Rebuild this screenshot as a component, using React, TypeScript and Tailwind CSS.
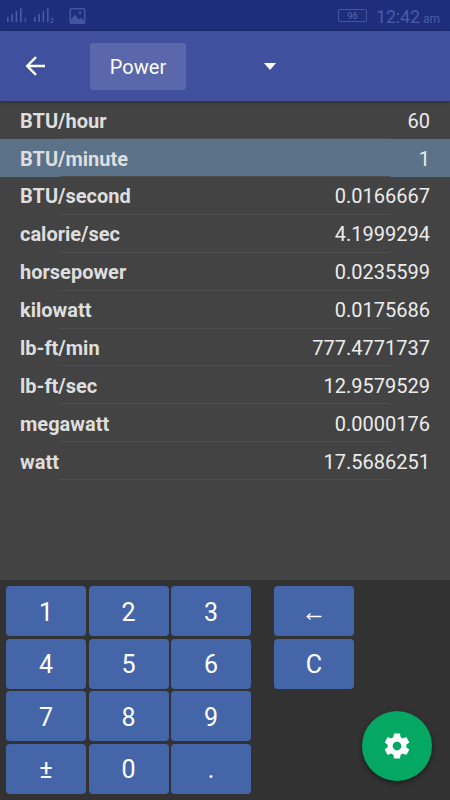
import React from "react";

const rows = [
  ["BTU/hour", "60"],
  ["BTU/minute", "1"],
  ["BTU/second", "0.0166667"],
  ["calorie/sec", "4.1999294"],
  ["horsepower", "0.0235599"],
  ["kilowatt", "0.0175686"],
  ["lb-ft/min", "777.4771737"],
  ["lb-ft/sec", "12.9579529"],
  ["megawatt", "0.0000176"],
  ["watt", "17.5686251"],
];

const digits = ["1", "2", "3", "4", "5", "6", "7", "8", "9", "±", "0", "."];

function Signal({ sim }: { sim: string }) {
  return (
    <svg width="21" height="17" viewBox="0 0 21 17" fill="#4a5ca3">
      <rect x="0" y="9" width="1.6" height="5" />
      <rect x="4.3" y="6" width="1.6" height="8" />
      <rect x="8.6" y="3" width="1.6" height="11" />
      <rect x="13" y="0" width="1.6" height="14" />
      <text x="16.2" y="15.3" fontSize="6.5" fontWeight="700" fontFamily="Roboto, sans-serif">
        {sim}
      </text>
    </svg>
  );
}

function StatusBar() {
  return (
    <div className="flex h-[31px] shrink-0 items-start bg-[#1e2e7c] pl-[7px] text-[#4a5ca3]">
      <div className="mt-2 flex gap-[5.5px]">
        <Signal sim="1" />
        <Signal sim="2" />
      </div>
      <svg className="mt-2 ml-[14px]" width="17" height="16" viewBox="0 0 17 16">
        <path
          fill="#4256a0"
          fillRule="evenodd"
          d="M2 0h13a1.5 1.5 0 0 1 1.5 1.5v13A1.5 1.5 0 0 1 15 16H2A1.5 1.5 0 0 1 .5 14.5v-13A1.5 1.5 0 0 1 2 0ZM2 1.5v10l4-5 4 5 2-2 3 3V1.5ZM11 3.2a1.5 1.5 0 1 0 .01 0Z"
        />
      </svg>
      <div className="mt-[9px] ml-auto flex h-[13px] w-[29px] items-center justify-center rounded-[2px] border border-[#4256a0] pt-px text-[9.5px] leading-none text-[#5969a9]">
        96
      </div>
      <div className="mt-[5px] mr-[10px] ml-[9px] flex h-6 w-[64px] items-baseline justify-between whitespace-nowrap leading-[24px]">
        <span className="text-[18px] tracking-[-0.2px]">12:42</span>
        <span className="text-[12px]">am</span>
      </div>
    </div>
  );
}

function Key({ label }: { label: string }) {
  return (
    <button className="flex h-[50px] w-[80px] items-center justify-center rounded-[4px] bg-[#4466a8] text-[25px] leading-none text-white">
      {label === "←" ? (
        <svg className="mt-[11px]" width="16" height="8" viewBox="0 0 16 8" fill="none" stroke="white" strokeWidth="1.3">
          <path d="M1 3.5h14.5M4.5 .5 1.2 3.5l3.3 3" />
        </svg>
      ) : (
        <span className="pt-[2px]">{label}</span>
      )}
    </button>
  );
}

export default function App() {
  return (
    <div className="relative flex h-[800px] w-[450px] flex-col overflow-hidden bg-[#434343] font-[Roboto,sans-serif]">
      <StatusBar />
      <header className="z-10 flex h-[70px] shrink-0 items-center bg-[#40509e] pl-[25px] shadow-[0_1px_4px_rgba(0,0,0,0.4)]">
        <svg width="21" height="20" viewBox="0 0 21 20" fill="none" stroke="white" strokeWidth="2.4">
          <path d="M20 10H2M11 1.2 2.2 10l8.8 8.8" />
        </svg>
        <div className="ml-[44px] flex h-[47px] w-[96px] items-center justify-center rounded-[3px] bg-[#5a67aa] pt-[2px] text-[20px] text-white">
          Power
        </div>
        <svg className="ml-[78px]" width="12" height="7" viewBox="0 0 12 7">
          <path fill="white" d="M0 0h12L6 7Z" />
        </svg>
      </header>
      <main className="flex-1">
        {rows.map(([name, value], i) => (
          <div key={name} className={i === 1 ? "h-[37.93px] bg-[#5b7289]" : "h-[37.93px]"}>
            <div className="flex h-[36.93px] items-center justify-between px-5 pt-[2.25px] text-[20px] text-[#ececec]">
              <span className="font-bold text-[#dedede]">{name}</span>
              <span>{value}</span>
            </div>
            <div className="mx-[60px] h-px bg-[#505050]" />
          </div>
        ))}
      </main>
      <section className="flex h-[220px] shrink-0 items-start gap-[23px] bg-[#323232] pt-[6px] pl-[6px]">
        <div className="grid grid-cols-[80px_80px_80px] gap-x-[2.5px] gap-y-[2.6px]">
          {digits.map((d) => (
            <Key key={d} label={d} />
          ))}
        </div>
        <div className="grid gap-y-[2.6px]">
          <Key label="←" />
          <Key label="C" />
        </div>
      </section>
      <button className="absolute top-[711px] left-[362px] flex size-[70px] items-center justify-center rounded-full bg-[#04a863] shadow-[0_2px_5px_rgba(0,0,0,0.45)]">
        <svg width="30" height="30" viewBox="0 0 24 24" fill="white">
          <path d="M19.43 12.98c.04-.32.07-.64.07-.98s-.03-.66-.07-.98l2.11-1.65c.19-.15.24-.42.12-.64l-2-3.46c-.12-.22-.39-.3-.61-.22l-2.49 1c-.52-.4-1.08-.73-1.69-.98l-.38-2.65C14.46 2.18 14.25 2 14 2h-4c-.25 0-.46.18-.49.42l-.38 2.65c-.61.25-1.17.59-1.69.98l-2.49-1c-.23-.09-.49 0-.61.22l-2 3.46c-.13.22-.07.49.12.64l2.11 1.65c-.04.32-.07.65-.07.98s.03.66.07.98l-2.11 1.65c-.19.15-.24.42-.12.64l2 3.46c.12.22.39.3.61.22l2.49-1c.52.4 1.08.73 1.69.98l.38 2.65c.03.24.24.42.49.42h4c.25 0 .46-.18.49-.42l.38-2.65c.61-.25 1.17-.59 1.69-.98l2.49 1c.23.09.49 0 .61-.22l2-3.46c.12-.22.07-.49-.12-.64l-2.11-1.65zM12 15.5c-1.93 0-3.5-1.57-3.5-3.5s1.57-3.5 3.5-3.5 3.5 1.57 3.5 3.5-1.57 3.5-3.5 3.5z" />
        </svg>
      </button>
    </div>
  );
}
